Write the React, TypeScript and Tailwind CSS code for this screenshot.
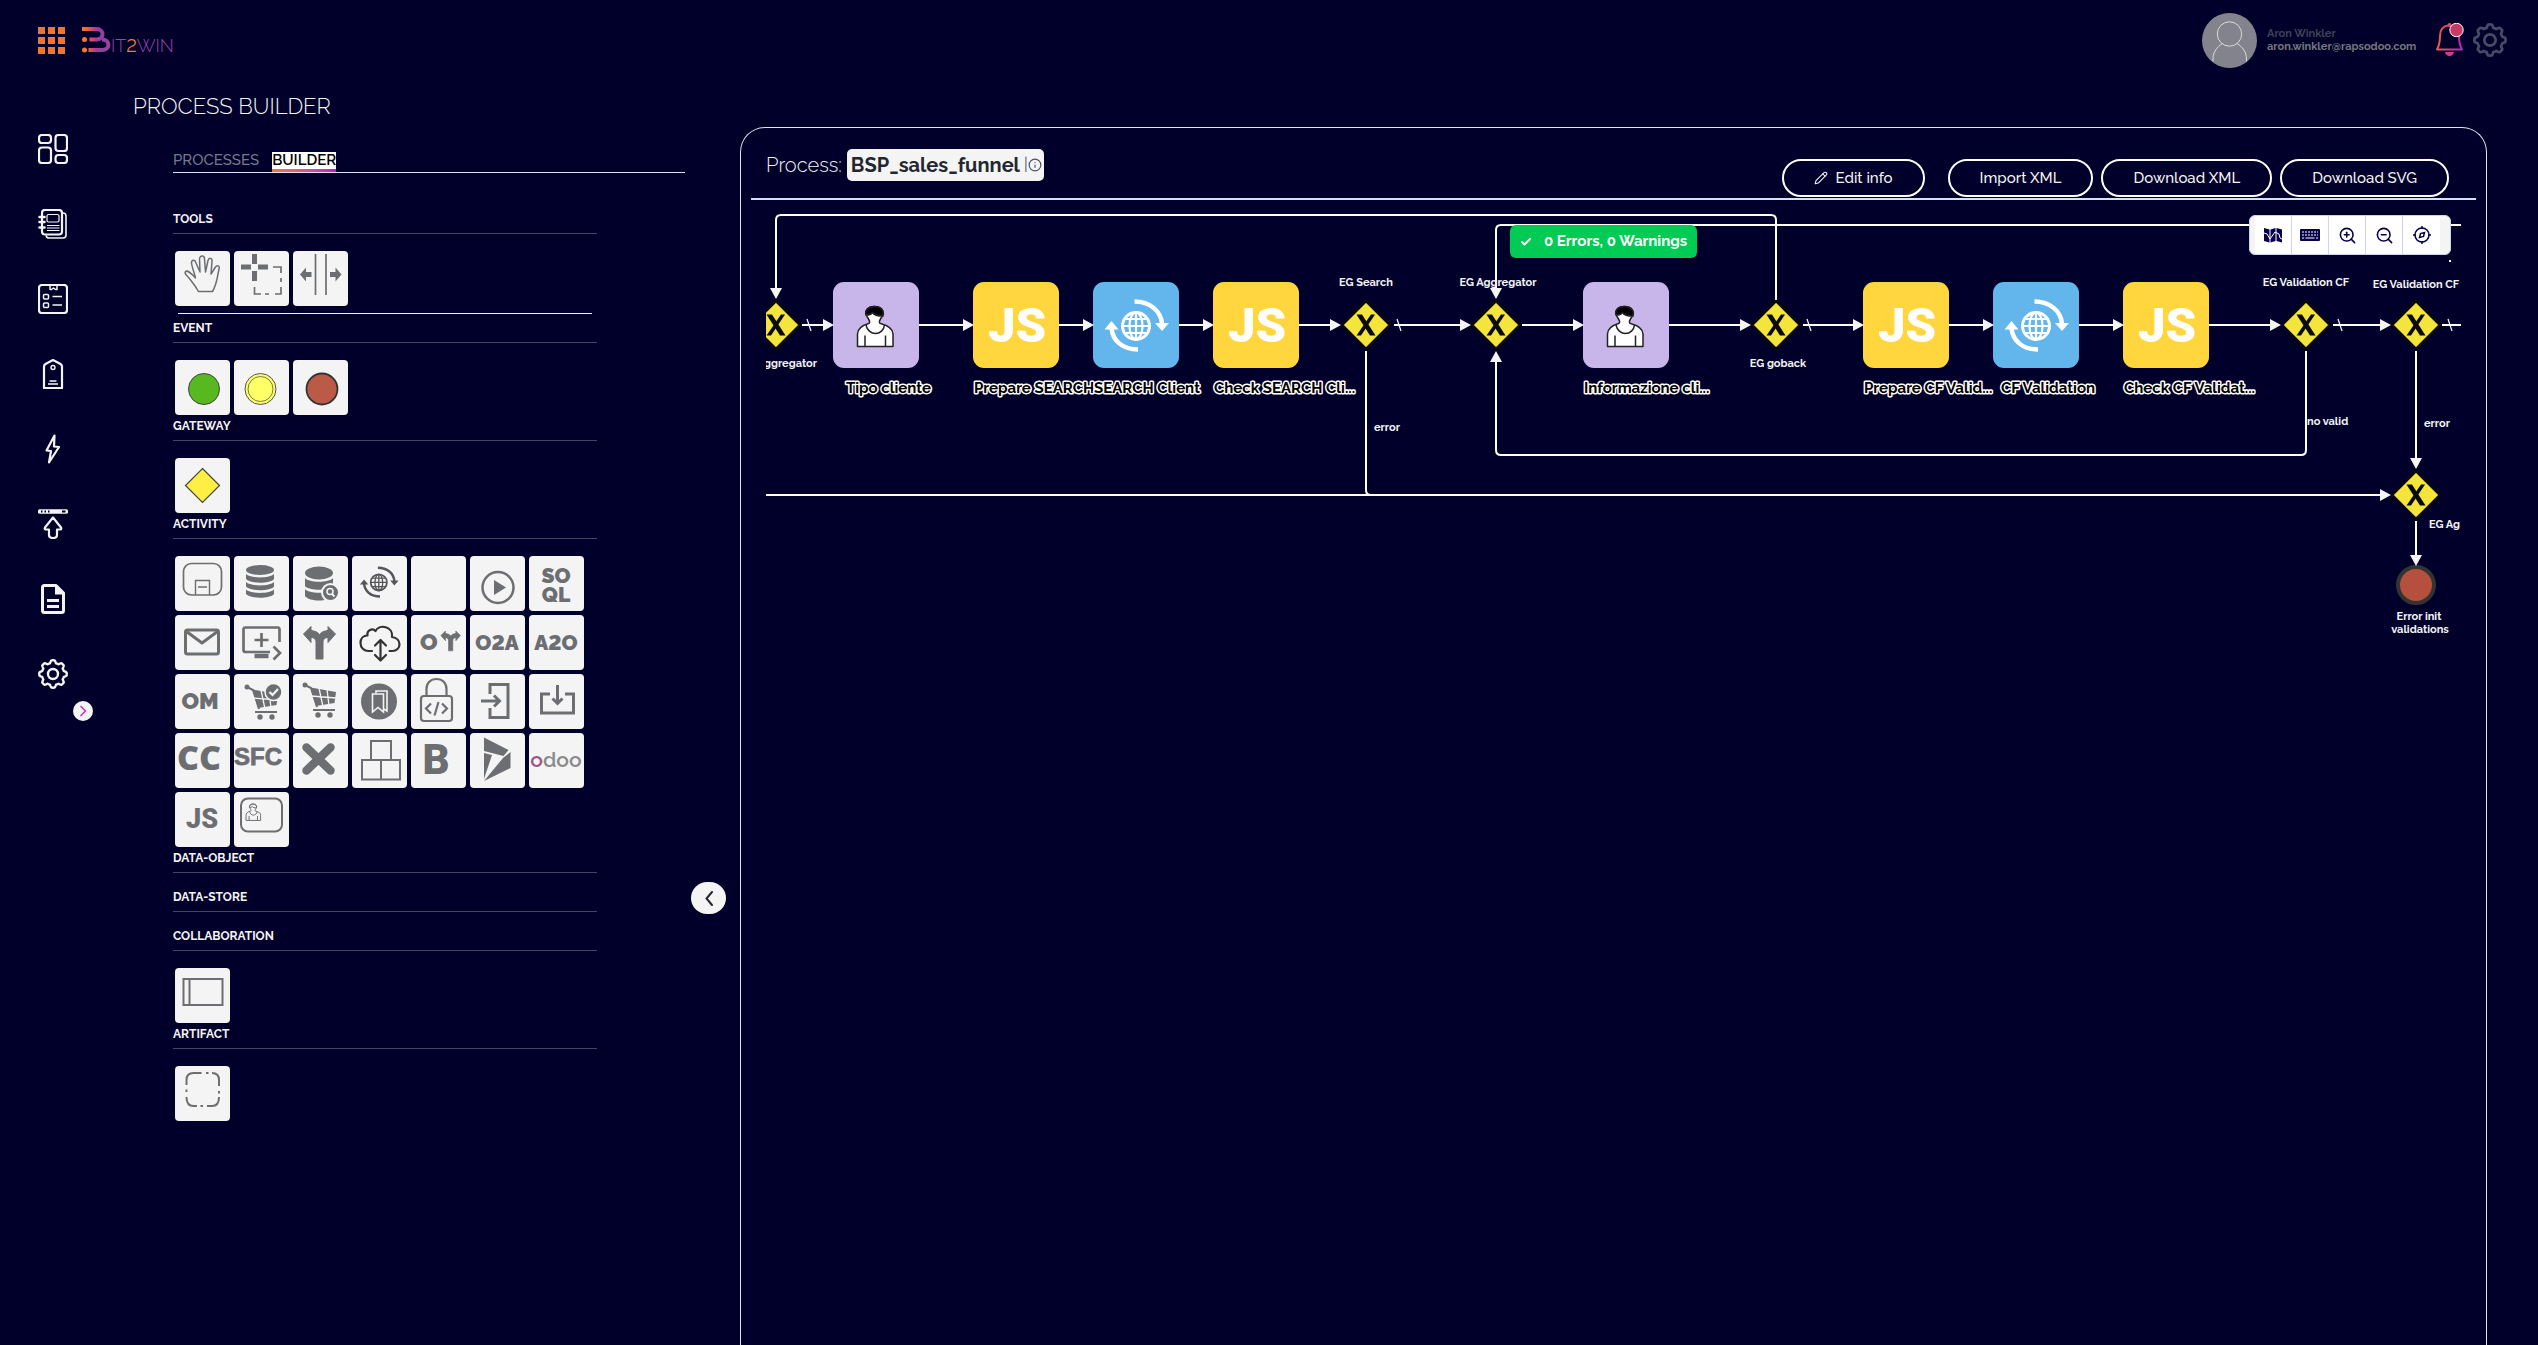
import type { ReactNode } from "react";
import { Check, Info, Pencil, ZoomIn, ZoomOut } from "lucide-react";

const GRAY = "#6d6e71";

/* ---------- shared drawings ---------- */

function gearPath(cx: number, cy: number, r: number, depth: number) {
  const pts: string[] = [];
  for (let i = 0; i < 160; i++) {
    const a = (i / 160) * Math.PI * 2;
    const k = Math.max(-1, Math.min(1, 1.7 * Math.cos(8 * a)));
    const rr = r + depth * k;
    pts.push(`${(cx + rr * Math.cos(a)).toFixed(2)} ${(cy + rr * Math.sin(a)).toFixed(2)}`);
  }
  return `M${pts.join("L")}Z`;
}

function Gear({ className }: { className: string }) {
  return (
    <svg className={className} viewBox="0 0 30 30" fill="none" stroke="currentColor" strokeWidth="2.400" strokeLinejoin="round" aria-hidden="true">
      <path d={gearPath(15, 15, 12.4, 1.3)} />
      <circle cx="15" cy="15" r="5" />
    </svg>
  );
}

/* globe with two turning arrows, drawn in an 86 x 86 box */
function GlobeArrows({ color, width }: { color: string; width: number }) {
  return (
    <g fill="none" stroke={color} strokeWidth={width}>
      <circle cx="43" cy="44" r="13.5" strokeWidth="3" />
      <ellipse cx="43" cy="44" rx="6.5" ry="13.5" strokeWidth="2.2" />
      <path d="M43 30v28M30 44h26M32 37h22M32 51h22" strokeWidth="2.2" />
      <path d="M41.500 19.500C57 19.500 68 29 69 42" />
      <path d="M62 41h14l-7 8z" fill={color} stroke="none" />
      <path d="M45 67.500C30 67.500 19.500 59 18.500 46" />
      <path d="M11.500 47.500h14l-7-8.500z" fill={color} stroke="none" />
    </g>
  );
}

/* person bust, drawn in an 86 x 86 box */
function Person({ line, fill, hair, width = 1.5 }: { line: string; fill: string; hair: string; width?: number }) {
  return (
    <g stroke={line} strokeWidth={width} fill={fill} strokeLinejoin="round">
      <path d="M24.500 64.500V52c0-5 3-8 11-10.500 1.500-.5 1.500-2 0-4.500-5-7-2-12.500 6-12.500s11 5.500 6 12.500c-1.500 2.500-1.500 4 0 4.500C56.500 44 60 47 60 52v12.500z" />
      <path d="M32 64V53.500M52.500 64V53.500M33 43c1 5 5 8.500 9.500 8.500S51 48 51.500 43" fill="none" />
      <path d="M33 33c-1.500-5.500 2.500-8.500 8.500-8.500 6.500 0 10 4 8.500 9.500-4 0-9-1-10.500-3.500-1 1.500-4 2.500-6.500 2.500z" fill={hair} />
    </g>
  );
}

/* ---------- palette tiles, each drawn in a 55 x 55 box ---------- */

function TileText({ children, x, y, size, anchor = "middle" }: { children: ReactNode; x: number; y: number; size: number; anchor?: "middle" | "start" }) {
  return (
    <text x={x} y={y} fontSize={size} textAnchor={anchor} className="font-black lining-nums" fill={GRAY}>
      {children}
    </text>
  );
}

function Fork() {
  return (
    <path
      d="M23 44V28c0-4-2-5.500-5-5.500v5L10.500 19l7.500-7.500v4c4 .5 7 1.500 8.500 4.500 1.500-3 4.500-4 8.500-4.500v-4l7.500 7.500-7.500 8.500v-5c-3 0-5 1.500-5 5.500v16z"
      fill={GRAY}
      stroke={GRAY}
      strokeLinejoin="round"
    />
  );
}

function Cart() {
  return (
    <g fill={GRAY}>
      <circle cx="12" cy="11" r="2.500" />
      <path d="M12 11l6 3 6 19" fill="none" stroke={GRAY} strokeWidth="2" />
      <path d="M17.500 13.500L43 18l-1.500 11L23 32z" />
      <path d="M18 22l25 2M26 14l4 19M34 15l2 17" stroke="#f4f4f4" strokeWidth="1.300" fill="none" />
      <path d="M20 36h22" stroke={GRAY} strokeWidth="2" />
      <circle cx="25" cy="41" r="2.700" />
      <circle cx="37" cy="41" r="2.700" />
    </g>
  );
}

type Tile = { name: string; art: ReactNode };

const toolTiles: Tile[] = [
  {
    name: "Hand tool",
    art: (
      <path
        d="M23.500 40.500C20 34 17 31 14 27c-3-3-5-5-3.500-6.500C13 19 16 22 20.500 27c-1.500-6-3.500-11-4-15 0-3.500 3.500-4 4.500 0l4 9-.5-13c.5-4 5-4 5 0l1 13L33 9.500c1-3.500 4.500-2.500 4 1L36 23l4.500-7c1.500-2.500 4.500-1 3.500 2-2 9-2 15-6.500 22.500z"
        fill="none"
        stroke={GRAY}
        strokeWidth="1.500"
        strokeLinejoin="round"
      />
    ),
  },
  {
    name: "Lasso tool",
    art: (
      <g fill="none" stroke={GRAY}>
        <path d="M20.500 3v10M20.500 20v10M7 16h10M24 16h10" strokeWidth="5" />
        <path d="M39 16h8v6M47 27v4M47 36v7h-6M35 43h-4M27 43h-6.500v-7" strokeWidth="1.700" />
      </g>
    ),
  },
  {
    name: "Space tool",
    art: (
      <g stroke={GRAY} fill={GRAY}>
        <path d="M22.500 3v41M33 3v41" strokeWidth="1.700" fill="none" />
        <path d="M7 23.500l6-7v4.500h5.500v5H13v4.500zM48.500 23.500l-6-7v4.500H37v5h5.500v4.500z" stroke="none" />
      </g>
    ),
  },
];

const eventTiles: Tile[] = [
  { name: "Start event", art: <circle cx="29" cy="29" r="15.500" fill="#58b820" stroke="#444" /> },
  {
    name: "Intermediate event",
    art: (
      <g fill="#ffff66" stroke="#555">
        <circle cx="26.500" cy="29" r="15.500" />
        <circle cx="26.500" cy="29" r="12.500" strokeWidth=".8" />
      </g>
    ),
  },
  { name: "End event", art: <circle cx="29" cy="29" r="15.500" fill="#bc5a48" stroke="#333" strokeWidth="1.800" /> },
];

const gatewayTiles: Tile[] = [{ name: "Gateway", art: <path d="M27.500 10.500l17 17-17 17-17-17z" fill="#ffee44" stroke="#444" strokeWidth="1.200" /> }];

const activityTiles: Tile[] = [
  {
    name: "Sub-process",
    art: (
      <g fill="none" stroke={GRAY} strokeWidth="1.700">
        <rect x="8.500" y="7.500" width="38" height="31.500" rx="8" />
        <path d="M20.500 39V24.500h14V39M23 31h9" strokeWidth="1.400" />
      </g>
    ),
  },
  {
    name: "Data storage",
    art: (
      <g fill={GRAY}>
        <ellipse cx="26" cy="14" rx="14" ry="5" />
        <path d="M12 18c4 4.500 24 4.500 28 0v5c-4 5-24 5-28 0zM12 26c4 4.500 24 4.500 28 0v4.500c-4 5-24 5-28 0zM12 33.500c4 4.500 24 4.500 28 0V38c-4 5-24 5-28 0z" />
      </g>
    ),
  },
  {
    name: "Data query",
    art: (
      <g fill={GRAY}>
        <ellipse cx="26" cy="17" rx="14" ry="6.500" />
        <path d="M12 22c4 5 24 5 28 0v8c-4 5-24 5-28 0zM12 33c4 5 24 5 28 0v7c-4 6-24 6-28 0z" />
        <circle cx="37.500" cy="36.500" r="8.500" stroke="#f4f4f4" strokeWidth="2" />
        <circle cx="37" cy="35.500" r="3" fill="none" stroke="#f4f4f4" strokeWidth="1.500" />
        <path d="M39 38l2.500 2.500" stroke="#f4f4f4" strokeWidth="1.800" />
      </g>
    ),
  },
  {
    name: "Web service",
    art: (
      <g transform="translate(1 0) scale(.6)">
        <GlobeArrows color="#55565a" width={4} />
      </g>
    ),
  },
  { name: "Blank", art: null },
  {
    name: "Run",
    art: (
      <g fill="none" stroke={GRAY} strokeWidth="2.500">
        <circle cx="28" cy="31.500" r="15.500" />
        <path d="M24 24l12 7.500L24 39z" fill={GRAY} stroke="none" />
      </g>
    ),
  },
  {
    name: "SOQL",
    art: (
      <>
        <TileText x={27} y={27} size={21}>SO</TileText>
        <TileText x={27} y={46} size={21}>QL</TileText>
      </>
    ),
  },
  {
    name: "Mail",
    art: (
      <g fill="none" stroke={GRAY} strokeWidth="3" strokeLinejoin="round">
        <rect x="10.500" y="15" width="33" height="24" rx="2" />
        <path d="M11.500 16.500L27 28l15.500-11.500" />
      </g>
    ),
  },
  {
    name: "Screen",
    art: (
      <g fill="none" stroke={GRAY} strokeWidth="2.700">
        <path d="M45.500 27V14.500q0-2-2-2h-32q-2 0-2 2V35q0 2 2 2H36" />
        <path d="M27.500 18v14M20.500 25h14" />
        <path d="M20.500 41h14" strokeWidth="4.500" />
        <path d="M39.500 31.500l6.500 6.500-6.500 6.500" />
      </g>
    ),
  },
  { name: "Fork", art: <Fork /> },
  {
    name: "Cloud sync",
    art: (
      <g fill="none" stroke="#333" strokeWidth="2.200" strokeLinecap="round" strokeLinejoin="round">
        <path d="M20 36h-3.500c-4.500 0-8-3.500-8-8s3-7.500 7-7.500c-1-5 5-8 8-4.500 4-7.500 18-4.500 16.500 6 4.500.5 7.500 3.500 7.500 7.500 0 3.500-3 6.500-7 6.500h-3" />
        <path d="M28.500 26v18M23 30.500l5.500-5.500 5.500 5.500M23 40l5.500 5.500L34 40" />
      </g>
    ),
  },
  {
    name: "Order fork",
    art: (
      <>
        <TileText x={9} y={35} size={23} anchor="start">O</TileText>
        <g transform="translate(23.500 9) scale(.61)">
          <Fork />
        </g>
      </>
    ),
  },
  { name: "O2A", art: <TileText x={27} y={35} size={21}>O2A</TileText> },
  { name: "A2O", art: <TileText x={27} y={35} size={21}>A2O</TileText> },
  { name: "OM", art: <TileText x={25} y={35} size={23}>OM</TileText> },
  {
    name: "Cart check",
    art: (
      <>
        <g transform="translate(1 2)">
          <Cart />
        </g>
        <circle cx="39.500" cy="18" r="8.500" fill={GRAY} stroke="#f4f4f4" strokeWidth="1.500" />
        <path d="M35.500 18l3 3 5.500-6" fill="none" stroke="#f4f4f4" strokeWidth="2.200" />
      </>
    ),
  },
  { name: "Cart", art: <Cart /> },
  {
    name: "Catalog",
    art: (
      <g fill="none" stroke="#f4f4f4" strokeWidth="1.600">
        <circle cx="27" cy="27.500" r="18" fill={GRAY} stroke="none" />
        <path d="M24 19v-2h11v20l-3-2" />
        <path d="M20.500 20h11v18l-5.500-4.500-5.500 4.500z" />
      </g>
    ),
  },
  {
    name: "Locked code",
    art: (
      <g fill="none" stroke={GRAY} strokeWidth="2.200">
        <rect x="10" y="22" width="31" height="25" rx="3" />
        <path d="M15.500 22v-7c0-6 4-10 10-10s10 4 10 10v7" />
        <path d="M20 29.500l-5 5 5 5M31 29.500l5 5-5 5M27.500 28l-4 13.500" />
      </g>
    ),
  },
  {
    name: "Log in",
    art: (
      <g fill="none" stroke={GRAY} strokeWidth="3">
        <path d="M20 20v-9.500h18v33H20v-9.500" />
        <path d="M11 27h18M24 21.500l5.500 5.500-5.500 5.500" />
      </g>
    ),
  },
  {
    name: "Import",
    art: (
      <g fill="none" stroke={GRAY} strokeWidth="3">
        <path d="M21 20h-8.500v19h32V20H36" />
        <path d="M28.500 11v18M23.500 24.500l5 5 5-5" />
      </g>
    ),
  },
  {
    name: "CC",
    art: (
      <text x="24" y="37" fontSize="34" textAnchor="middle" fontFamily="Open Sans" className="font-extrabold" fill={GRAY}>
        CC
      </text>
    ),
  },
  {
    name: "SFC",
    art: (
      <text x="24" y="32" fontSize="24" textAnchor="middle" fontFamily="Liberation Sans" className="font-bold" fill={GRAY} stroke={GRAY} strokeWidth=".8">
        SFC
      </text>
    ),
  },
  { name: "Error", art: <path d="M13.500 14.500l24 23M37.500 14.500l-24 23" stroke={GRAY} strokeWidth="8.500" strokeLinecap="round" /> },
  {
    name: "Boxes",
    art: (
      <g fill="none" stroke={GRAY} strokeWidth="2">
        <path d="M19 26V8h20v18M10 27h38v19.500H10zM29 27v19.500" />
      </g>
    ),
  },
  {
    name: "B",
    art: (
      <text x="25" y="41" fontSize="42" textAnchor="middle" fontFamily="Roboto" className="font-black" fill={GRAY}>
        B
      </text>
    ),
  },
  {
    name: "Dynamics",
    art: (
      <g fill={GRAY}>
        <path d="M14 4.500L38.500 17l-5 6L14 18z" />
        <path d="M40.500 19v16L14 48l19-23z" />
        <path d="M14 20l8 2-8 24z" />
      </g>
    ),
  },
  {
    name: "odoo",
    art: (
      <text x="27" y="34" fontSize="21" textAnchor="middle" className="font-semibold" fill="#8a8a8c">
        <tspan fill="#9c5589">o</tspan>doo
      </text>
    ),
  },
  {
    name: "JS",
    art: (
      <text x="27" y="36" fontSize="27" textAnchor="middle" fontFamily="Roboto" className="font-black" fill={GRAY}>
        JS
      </text>
    ),
  },
  {
    name: "User task",
    art: (
      <>
        <rect x="7" y="6.500" width="41" height="33" rx="7" fill="none" stroke={GRAY} strokeWidth="2" />
        <g transform="translate(2 2) scale(.41)">
          <Person line={GRAY} fill="none" hair="none" width={2.4} />
        </g>
      </>
    ),
  },
];

const poolTiles: Tile[] = [
  {
    name: "Pool",
    art: <path d="M8.500 11h39v26h-39zM14.500 11v26" fill="none" stroke={GRAY} strokeWidth="2" />,
  },
];

const artifactTiles: Tile[] = [
  {
    name: "Group",
    art: (
      <g fill="none" stroke={GRAY} strokeWidth="2">
        <path d="M11.500 19v-5q0-7 7-7h8M31 7h2.500M37 7q7 0 7 7v6M44 25v2.500M44 31q0 9-7 9h-5M28 40h-2.500M22 40h-3.500q-7 0-7-9M11.500 26v-2.500" />
      </g>
    ),
  },
];

function Palette({ tiles }: { tiles: Tile[] }) {
  return (
    <div className="ml-0.5 flex flex-wrap gap-1 pt-1">
      {tiles.map((t) => (
        <button key={t.name} type="button" aria-label={t.name} className="size-[55px] rounded-[4px] bg-[#f4f4f4]">
          <svg viewBox="0 0 55 55" className="block size-[55px]" aria-hidden="true">
            {t.art}
          </svg>
        </button>
      ))}
    </div>
  );
}

function Group({ title, tiles, ruled = false }: { title: string; tiles: Tile[]; ruled?: boolean }) {
  return (
    <section>
      <h2 className="h-[26px] border-b border-[#45455f] text-xs leading-[22px] font-bold text-[#f4f4f4]">{title}</h2>
      <div className="pt-[13px]">
        {tiles.length > 0 && <Palette tiles={tiles} />}
        {ruled && <hr className="mx-[5px] mt-[7px] mb-[3px] border-t border-[#f4f4f4]" />}
      </div>
    </section>
  );
}

/* ---------- side navigation ---------- */

const navIcons: { name: string; art: ReactNode }[] = [
  {
    name: "Dashboard",
    art: (
      <>
        <rect x="1" y="1" width="12" height="8" rx="3" />
        <rect x="17.500" y="1" width="11.500" height="16" rx="3" />
        <rect x="1" y="13.500" width="12" height="15.500" rx="3" />
        <rect x="17.500" y="21" width="11.500" height="8" rx="3" />
      </>
    ),
  },
  {
    name: "Catalog",
    art: (
      <>
        <rect x="4" y="1" width="20" height="24.500" rx="3" />
        <path d="M25 4q3 0 3 3v19q0 3-3 3H11q-2.500 0-3-2.500" strokeWidth="1.600" />
        <rect x="9" y="5.500" width="12" height="7.500" rx="1.500" strokeWidth="1.200" />
        <path d="M9 16.500h12.500M9 19h12.500M9 21.500h12.500" strokeWidth="1.200" />
        <path d="M1.500 8h5M1.500 13h5M1.500 18.500h5" strokeWidth="2.500" strokeLinecap="round" />
      </>
    ),
  },
  {
    name: "Checklist",
    art: (
      <>
        <rect x="1" y="1" width="28" height="28" rx="3" />
        <path d="M12 1v4.500h1.500l2-1.500 2 1.500H19V1" strokeWidth="1.500" />
        <path d="M14.500 12.500h9.500M14.500 21h9.500" strokeWidth="1.500" />
        <rect x="5.500" y="10.500" width="5" height="4.500" rx="1" strokeWidth="1.500" />
        <rect x="5.500" y="19" width="5" height="4.500" rx="1" strokeWidth="1.500" />
      </>
    ),
  },
  {
    name: "Prices",
    art: (
      <>
        <path d="M6 29V7.500Q6 6 7.500 5L15 1l7.500 4Q24 6 24 7.500V29z" />
        <circle cx="15" cy="8.500" r="2" strokeWidth="1.400" />
        <path d="M11.500 22h7M10 25h10" strokeWidth="1.300" />
      </>
    ),
  },
  { name: "Actions", art: <path d="M16.500 1.500L8.500 16.500l4.500.5-2 11.500L21 13l-5-.5z" /> },
  {
    name: "Publish",
    art: (
      <>
        <path d="M2 2.500h26" strokeWidth="4.500" strokeLinecap="round" />
        <path d="M3 2.500h1.500M6.500 2.500H8M10 2.500h1.500M24 2.500h3.500" stroke="#00002b" strokeWidth="1.800" />
        <path d="M15 8.500l8 10q1 2-1.500 2H19V26q0 3-4 3t-4-3v-5.500H8.500q-2.500 0-1.500-2z" />
      </>
    ),
  },
  {
    name: "Documents",
    art: (
      <>
        <path d="M6.500 1.500H18l7.500 7.500v17.500q0 2-2 2h-17q-2 0-2-2v-23q0-2 2-2z" strokeWidth="3" />
        <path d="M17 1v9.500h9.500z" fill="currentColor" stroke="none" />
        <path d="M9 16.500h12M9 22.500h12" strokeWidth="3" />
      </>
    ),
  },
];

function SideNav() {
  return (
    <nav aria-label="Main" className="w-[133px] shrink-0 pt-[54px] pl-[38px] text-[#f4f4f4]">
      <ul className="flex flex-col gap-[45px]">
        {navIcons.map((n) => (
          <li key={n.name} className="h-[30px]">
            <a href="#" aria-label={n.name} className="block size-[30px]">
              <svg viewBox="0 0 30 30" className="block size-[30px]" fill="none" stroke="currentColor" strokeWidth="2.200" strokeLinejoin="round" aria-hidden="true">
                {n.art}
              </svg>
            </a>
          </li>
        ))}
        <li className="h-[30px]">
          <a href="#" aria-label="Settings" className="block size-[30px]">
            <Gear className="block size-[30px]" />
          </a>
        </li>
      </ul>
      <button type="button" aria-label="Expand menu" className="mt-3 ml-[35px] flex size-5 items-center justify-center rounded-full bg-[#f4f4f4]">
        <svg viewBox="0 0 20 20" className="size-5" fill="none" stroke="#c22fd0" strokeWidth="1.500" aria-hidden="true">
          <path d="M7.500 5l5 5-5 5" />
        </svg>
      </button>
    </nav>
  );
}

/* ---------- top bar ---------- */

function Logo() {
  return (
    <svg viewBox="0 0 100 32" className="h-8 w-[100px]" aria-label="BIT2WIN" role="img">
      <defs>
        <linearGradient id="logo-stroke" x1="0" x2="28" y1="0" y2="0" gradientUnits="userSpaceOnUse">
          <stop offset="0" stopColor="#f7772c" />
          <stop offset=".2" stopColor="#f0603f" />
          <stop offset=".5" stopColor="#b5359a" />
          <stop offset=".75" stopColor="#8a45a0" />
          <stop offset="1" stopColor="#a43fa0" />
        </linearGradient>
      </defs>
      <g fill="none" stroke="url(#logo-stroke)" strokeWidth="4">
        <path d="M0 5h14.500c8 0 8 10.500 0 10.500H7.500" />
        <path d="M20 15.500c8.500 0 8.500 10.500 0 10.500H6.500" />
      </g>
      <circle cx="2.500" cy="15.500" r="2.500" fill="#f7772c" />
      <circle cx="2.500" cy="26" r="2.500" fill="#f7772c" />
      <text x="29" y="28" fontSize="18" className="font-light lining-nums" fill="#9a45a5">
        IT<tspan fill="#f47a30" className="font-normal">2</tspan>WIN
      </text>
    </svg>
  );
}

function TopBar() {
  return (
    <header className="flex h-20 shrink-0 items-center justify-between pr-[31px] pl-[38px]">
      <div className="flex items-center gap-[17px]">
        <button type="button" aria-label="Apps" className="grid grid-cols-3 gap-[3px]">
          {Array.from({ length: 9 }, (_, i) => (
            <span key={i} className="size-[7px] bg-[#f4742f]" />
          ))}
        </button>
        <a href="#" className="block">
          <Logo />
        </a>
      </div>
      <div className="flex items-center">
        <svg viewBox="0 0 55 55" className="size-[55px]" fill="none" stroke="#dcdcdc" aria-hidden="true">
          <circle cx="27.500" cy="27.500" r="27.500" fill="#82838c" stroke="none" />
          <circle cx="27.500" cy="21" r="12.200" />
          <path d="M11 48.500V46c0-7 4-12 9.500-15.500M44.500 48.500V46c0-7-4-12-9.500-15.500" />
        </svg>
        <div className="ml-2.5 w-[154px] text-[11px] leading-[13px]">
          <p className="font-bold text-[#3d4256]">Aron Winkler</p>
          <p className="font-bold text-[#74767e]">aron.winkler@rapsodoo.com</p>
        </div>
        <button type="button" aria-label="Notifications" className="ml-3.5">
          <svg viewBox="0 0 30 34" className="h-[34px] w-[30px]" fill="none" aria-hidden="true">
            <defs>
              <linearGradient id="bell" x1="0" x2="30" y1="0" y2="0" gradientUnits="userSpaceOnUse">
                <stop offset="0" stopColor="#f0643c" />
                <stop offset="1" stopColor="#b41cc4" />
              </linearGradient>
            </defs>
            <path d="M14.500 2.500C8 2.500 5 7 5 13c0 6-1 10-3 13.500h25c-2-3.500-3-7.500-3-13.500 0-6-3-10.500-9.500-10.500z" stroke="url(#bell)" strokeWidth="2" strokeLinejoin="round" />
            <path d="M10 29h9c-.5 5.500-8.500 5.500-9 0z" fill="#cf3a92" />
            <circle cx="14.500" cy="2" r="2" fill="#dc4c5c" />
            <circle cx="21.500" cy="7" r="6.700" fill="#c93b66" stroke="#fff" />
          </svg>
        </button>
        <button type="button" aria-label="Settings" className="ml-2 text-[#464c66]">
          <Gear className="block size-[34px]" />
        </button>
      </div>
    </header>
  );
}

/* ---------- process diagram ---------- */

function Arrow({ x, y, dir = 0 }: { x: number; y: number; dir?: number }) {
  return <path d="M0 0l-11-6v12z" transform={`translate(${x} ${y}) rotate(${dir})`} fill="#f4f4f4" />;
}

function Gateway({ x, y = 325 }: { x: number; y?: number }) {
  return (
    <g transform={`translate(${x} ${y})`}>
      <path d="M0-24L24 0 0 24-24 0z" fill="#f3e53b" stroke="#0a0a0a" strokeWidth="2.500" strokeLinejoin="round" />
      <path d="M-9.500-10.500h5.500L9.500 10.500H4z" fill="#0a0a0a" />
      <path d="M9-10.500H5L-9.500 10.500h4.500z" fill="#0a0a0a" />
    </g>
  );
}

type TaskKind = "user" | "js" | "web";
const tasks: { kind: TaskKind; x: number; label: string; labelX: number }[] = [
  { kind: "user", x: 833, label: "Tipo cliente", labelX: 846 },
  { kind: "js", x: 973, label: "Prepare SEARCH", labelX: 974 },
  { kind: "web", x: 1093, label: "SEARCH Client", labelX: 1094 },
  { kind: "js", x: 1213, label: "Check SEARCH Cli...", labelX: 1214 },
  { kind: "user", x: 1583, label: "Informazione cli...", labelX: 1584 },
  { kind: "js", x: 1863, label: "Prepare CF Valid...", labelX: 1864 },
  { kind: "web", x: 1993, label: "CF Validation", labelX: 2001 },
  { kind: "js", x: 2123, label: "Check CF Validat...", labelX: 2124 },
];
const taskFill: Record<TaskKind, string> = { user: "#c8b6ea", js: "#ffd63e", web: "#62b6ec" };

const flows: [number, number][] = [
  [919, 974],
  [1059, 1094],
  [1179, 1214],
  [1299, 1341],
  [1394, 1471],
  [1522, 1584],
  [1669, 1751],
  [1803, 1864],
  [1949, 1994],
  [2079, 2124],
  [2209, 2281],
  [2333, 2391],
  [802, 834],
];

const notes: { text: string; x: number; y: number; anchor?: "start" | "middle" | "end" }[] = [
  { text: "EG Aggregator", x: 817, y: 367, anchor: "end" },
  { text: "EG Search", x: 1366, y: 286 },
  { text: "EG Aggregator", x: 1498, y: 286 },
  { text: "EG goback", x: 1778, y: 367 },
  { text: "EG Validation CF", x: 2306, y: 286 },
  { text: "EG Validation CF", x: 2416, y: 288 },
  { text: "error", x: 1374, y: 431, anchor: "start" },
  { text: "error", x: 2424, y: 427, anchor: "start" },
  { text: "no valid", x: 2307, y: 425, anchor: "start" },
  { text: "EG Ag", x: 2429, y: 528, anchor: "start" },
  { text: "Error init", x: 2419, y: 620 },
  { text: "validations", x: 2420, y: 633 },
];

function Diagram() {
  return (
    <svg className="block h-[460px] w-full" role="img" aria-label="BSP_sales_funnel process diagram">
      <g transform="translate(-766 -200)">
        <g fill="none" stroke="#fff" strokeWidth="2">
          <path d="M776 290v-70q0-5 5-5h990q5 0 5 5v80" />
          <path d="M1496 290v-60q0-5 5-5h965" />
          <path d="M1366 351v139q0 5 5 5" />
          <path d="M766 495h1614" />
          <path d="M1496 361v89q0 5 5 5h800q5 0 5-5v-99" />
          <path d="M2416 351v108M2416 521v38" />
          {flows.map(([a, b]) => (
            <path key={a} d={`M${a} 325H${b - 8}`} />
          ))}
          <path d="M2442 325h24" />
          {[808, 1398, 1808, 2339, 2449].map((x) => (
            <path key={x} d={`M${x - 1} 319l4 12`} strokeWidth="1.200" />
          ))}
        </g>
        {[776, 1366, 1496, 1776, 2306, 2416].map((x) => (
          <Gateway key={x} x={x} />
        ))}
        <Gateway x={2416} y={495} />
        <circle cx="2416" cy="585" r="18" fill="#b5503f" stroke="#333" strokeWidth="4" />
        {tasks.map((t) => (
          <g key={t.x} transform={`translate(${t.x} 282)`}>
            <rect width="86" height="86" rx="11" fill={taskFill[t.kind]} />
            {t.kind === "user" && <Person line="#222" fill="#fff" hair="#000" />}
            {t.kind === "web" && <GlobeArrows color="#fff" width={4.500} />}
            {t.kind === "js" && (
              <text x="44" y="60" fontSize="49" textAnchor="middle" fontFamily="Roboto" className="font-black" fill="#fff">
                JS
              </text>
            )}
          </g>
        ))}
        {flows.map(([a, b]) => (
          <Arrow key={a} x={b} y={325} />
        ))}
        <Arrow x={776} y={299} dir={90} />
        <Arrow x={1496} y={299} dir={90} />
        <Arrow x={1496} y={351} dir={-90} />
        <Arrow x={2416} y={469} dir={90} />
        <Arrow x={2416} y={566} dir={90} />
        <Arrow x={2391} y={495} />
        {tasks.map((t) => (
          <text key={t.x} x={t.labelX} y="393" fontSize="15" className="font-bold" fill="#000" stroke="#fff" strokeWidth="3" strokeLinejoin="round" paintOrder="stroke">
            {t.label}
          </text>
        ))}
        {notes.map((n) => (
          <text key={`${n.x}-${n.y}`} x={n.x} y={n.y} fontSize="11" textAnchor={n.anchor ?? "middle"} className="font-bold" fill="#f4f4f4">
            {n.text}
          </text>
        ))}
        <rect x="2449" y="260" width="2" height="2" fill="#f4f4f4" />
      </g>
    </svg>
  );
}

const canvasTools: { name: string; art: ReactNode }[] = [
  {
    name: "Toggle minimap",
    art: (
      <svg viewBox="0 0 18 16" className="h-4 w-[18px]" aria-hidden="true">
        <path d="M0 1l5.500 1.500v13L0 14zM6.500 2.500l5-1.500v13l-5 1.500zM12.500 1L18 2.500v13L12.500 14z" fill="currentColor" />
        <path d="M0 6l3 1 3 5 5-7 4 2 1 4 2 1" fill="none" stroke="#fff" />
      </svg>
    ),
  },
  {
    name: "Keyboard shortcuts",
    art: (
      <svg viewBox="0 0 20 12" className="h-3 w-5" aria-hidden="true">
        <rect width="20" height="12" rx="1" fill="currentColor" />
        <path d="M2 3h16M2 6h16" stroke="#fff" strokeDasharray="2 1" />
        <path d="M2 9h2M5.500 9h9M16 9h2" stroke="#fff" />
      </svg>
    ),
  },
  { name: "Zoom in", art: <ZoomIn className="size-[19px]" strokeWidth={2} /> },
  { name: "Zoom out", art: <ZoomOut className="size-[19px]" strokeWidth={2} /> },
  {
    name: "Center diagram",
    art: (
      <svg viewBox="0 0 18 18" className="size-[18px]" fill="none" stroke="currentColor" strokeWidth="1.500" aria-hidden="true">
        <circle cx="9" cy="9" r="7" />
        <path d="M9 0v3M9 15v3M0 9h3M15 9h3" />
        <path d="M11.500 6.500l-1 4-4 1 1-4z" />
      </svg>
    ),
  },
];

function PillButton({ children }: { children: ReactNode }) {
  return (
    <button type="button" className="flex h-[38px] items-center rounded-full border-2 border-white px-[30px] text-[15px] font-medium text-[#f4f4f4]">
      {children}
    </button>
  );
}

function ProcessPanel() {
  return (
    <section className="mr-[51px] flex min-w-0 flex-1 flex-col rounded-t-[25px] border border-b-0 border-[#dfe3f4]">
      <div className="mx-2.5 flex h-[72px] justify-between border-b-2 border-[#d5e3f0] pr-[27px] pl-[15px]">
        <div className="mt-[21px] flex h-8 items-center">
          <h1 className="text-xl font-light text-[#f4f4f4]">Process:</h1>
          <div className="ml-[5px] flex h-8 items-center rounded-[5px] bg-[#f4f4f4] pr-0.5 pl-1 text-[#23262f]">
            <span className="text-xl font-bold">BSP_sales_funnel</span>
            <span className="ml-1 text-base text-[#4a4f68]">|</span>
            <Info className="size-[14px] text-[#4a4f68]" strokeWidth={2} aria-label="Process details" />
          </div>
        </div>
        <div className="flex items-end gap-2 pb-px">
          <div className="mr-[15px]">
            <PillButton>
              <Pencil className="mr-2 size-[14px]" strokeWidth={1.800} />
              Edit info
            </PillButton>
          </div>
          <PillButton>Import XML</PillButton>
          <PillButton>Download XML</PillButton>
          <PillButton>Download SVG</PillButton>
        </div>
      </div>
      <div className="relative mx-[25px] flex-1 overflow-hidden">
        <Diagram />
        <div role="status" className="absolute top-[25px] left-[744px] flex h-[33px] items-center rounded-md bg-[#00cb54] px-2.5 text-[15px] font-bold text-white">
          <Check className="mr-3 size-3" strokeWidth={4} />
          0 Errors, 0 Warnings
        </div>
        <div role="toolbar" aria-label="Canvas" className="absolute top-[15px] right-2.5 flex h-10 overflow-hidden rounded-md border border-[#ccd3ea] bg-[#f4f4f4] pr-2.5 pl-[5px] text-[#06004d]">
          {canvasTools.map((t) => (
            <button key={t.name} type="button" aria-label={t.name} className="flex w-[37px] items-center justify-center border-r border-[#ccd3ea] bg-white last:border-r-0">
              {t.art}
            </button>
          ))}
        </div>
      </div>
    </section>
  );
}

/* ---------- page ---------- */

export default function App() {
  return (
    <div className="flex min-h-screen flex-col bg-[#00002b] font-[Raleway,Lato,sans-serif]">
      <TopBar />
      <div className="flex flex-1">
        <SideNav />
        <main className="flex min-w-0 flex-1 flex-col pt-2.5">
          <p className="h-8 text-[22px] leading-8 font-light text-[#f4f4f4]">PROCESS BUILDER</p>
          <div className="mt-[5px] flex flex-1">
            <div className="w-[552px] shrink-0 pt-[25px] pl-10">
              <div role="tablist" className="flex gap-[13px] border-b border-[#dfe3f4] text-[15px] leading-[17px]">
                <button type="button" role="tab" aria-selected="false" className="h-5 pb-[3px] font-medium text-[#77788a]">
                  PROCESSES
                </button>
                <button type="button" role="tab" aria-selected="true" className="flex h-5 flex-col bg-white font-semibold text-black">
                  BUILDER
                  <span className="h-[3px] w-full bg-linear-to-r from-[#f4742f] to-[#b41cc4]" />
                </button>
              </div>
              <div className="mt-[35px] w-[424px]">
                <Group title="TOOLS" tiles={toolTiles} ruled />
                <Group title="EVENT" tiles={eventTiles} />
                <Group title="GATEWAY" tiles={gatewayTiles} />
                <Group title="ACTIVITY" tiles={activityTiles} />
                <Group title="DATA-OBJECT" tiles={[]} />
                <Group title="DATA-STORE" tiles={[]} />
                <Group title="COLLABORATION" tiles={poolTiles} />
                <Group title="ARTIFACT" tiles={artifactTiles} />
              </div>
            </div>
            <div className="mr-3.5 ml-1.5 shrink-0 pt-[755px]">
              <button type="button" aria-label="Collapse palette" className="flex h-8 w-[35px] items-center justify-center rounded-[16px] bg-[#f4f4f4]">
                <svg viewBox="0 0 16 16" className="size-4" fill="none" stroke="#23262f" strokeWidth="2" strokeLinecap="round" aria-hidden="true">
                  <path d="M11 2L5.500 8.500 11 15" />
                </svg>
              </button>
            </div>
            <ProcessPanel />
          </div>
        </main>
      </div>
    </div>
  );
}
